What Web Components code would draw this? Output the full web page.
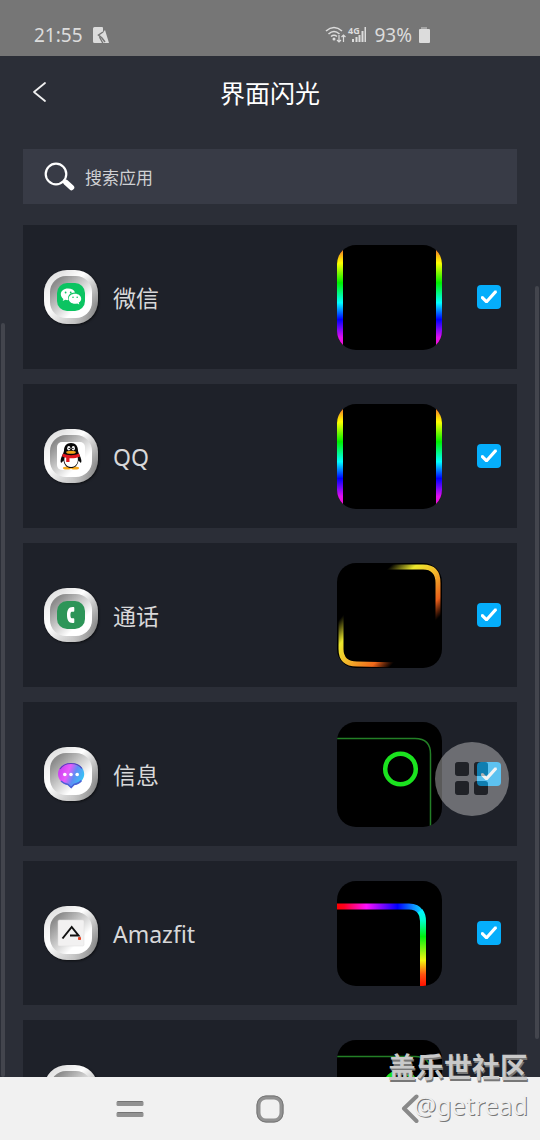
<!DOCTYPE html>
<html lang="zh-CN">
<head>
<meta charset="utf-8">
<meta name="viewport" content="width=device-width, initial-scale=1">
<title>界面闪光</title>
<style>
  body {
    margin: 0;
    font-family: 'Noto Sans', 'Noto Sans CJK SC', sans-serif;
  }
</style>
</head>
<body>
<edge-light-page></edge-light-page>

<script>
const define = (name, html, update) => {
  const tpl = document.createElement('template');
  tpl.innerHTML = html;
  customElements.define(name, class extends HTMLElement {
    static observedAttributes = ['name', 'icon', 'effect'];
    constructor() {
      super();
      this.attachShadow({mode: 'open'}).appendChild(tpl.content.cloneNode(true));
    }
    connectedCallback() {
      if (update) update(this, this.shadowRoot);
    }
    attributeChangedCallback() {
      if (update && this.isConnected) update(this, this.shadowRoot);
    }
  });
};

// artwork of each app, drawn in a 54x54 box
const appIcons = {
  wechat: `
    <rect x="13" y="13" width="28" height="28" rx="10" fill="#0bc461"/>
    <path d="M24 18.500c-4.200 0-7.200 2.500-7.200 5.800 0 1.900 1 3.500 2.600 4.600l-.7 2.200 2.700-1.300c1 .3 1.900.4 3 .3-1.500-4.600 2.200-7.700 6.600-7.600-.7-2.400-3.500-4-7-4z" fill="#fff"/>
    <path d="M31 23.700c-3.600 0-6.300 2.200-6.300 5s2.700 5 6.300 5c.8 0 1.500-.1 2.200-.3l2.100 1.100-.6-1.900c1.500-.9 2.500-2.300 2.500-3.900 0-2.800-2.700-5-6.200-5z" fill="#fff"/>
    <g fill="#0bc461"><circle cx="21.600" cy="22.500" r=".9"/><circle cx="26.700" cy="22.500" r=".9"/><circle cx="29" cy="27.300" r=".8"/><circle cx="33.200" cy="27.300" r=".8"/></g>`,
  qq: `
    <rect x="13" y="13" width="28" height="28" rx="5" fill="#fff"/>
    <ellipse cx="23" cy="39" rx="4" ry="1.500" fill="#f7a91c"/><ellipse cx="31" cy="39" rx="4" ry="1.500" fill="#f7a91c"/>
    <path d="M27 14c-4.500 0-7 3-7 7.500 0 2-2.800 6-3.300 9.500-.3 2 .2 3.300 1 2.600l1.800-2.200c.7 5 3.700 7.600 7.500 7.600s6.800-2.600 7.500-7.600l1.800 2.200c.8.700 1.300-.6 1-2.600-.5-3.500-3.300-7.500-3.300-9.500 0-4.500-2.500-7.500-7-7.500z" fill="#080808"/>
    <path d="M21 27h12.300c2 6-1 11-6.200 11s-8.200-5-6.100-11z" fill="#fff"/>
    <ellipse cx="24.800" cy="19.300" rx="1.600" ry="2.300" fill="#fff"/><ellipse cx="29.300" cy="19.300" rx="1.600" ry="2.300" fill="#fff"/>
    <circle cx="25.200" cy="19.500" r=".8" fill="#111"/><circle cx="28.900" cy="19.500" r=".8" fill="#111"/>
    <ellipse cx="27" cy="23.300" rx="4.800" ry="1.500" fill="#f7a91c"/>
    <path d="M19 24.500c5 2.200 11 2.200 16 0l1 3c-3 1.500-7 2-10.500 1.800V33h-3.300v-4.200c-1.500-.3-3-.8-4.200-1.500z" fill="#e01920"/>`,
  call: `
    <rect x="13" y="13" width="28" height="28" rx="10" fill="#2d9558"/>
    <path d="M28.500 19c-4 0-5.500 3.500-5.500 8s1.500 8 5.500 8h.8c.6 0 1-.4 1-1v-2.800c0-.6-.4-1-1-1h-1.600c-1.600 0-1.800-6.400 0-6.400h1.600c.6 0 1-.4 1-1V20c0-.6-.4-1-1-1z" fill="#fff"/>`,
  message: `
    <defs><linearGradient id="bubble" x1="0" y1=".3" x2="1" y2=".7"><stop offset="0" stop-color="#c83df0"/><stop offset=".35" stop-color="#e85cfa"/><stop offset=".6" stop-color="#5f8df5"/><stop offset="1" stop-color="#2fcff5"/></linearGradient></defs>
    <path d="M27 16c-7.500 0-13 4.600-13 11 0 5.500 4 9.800 9.800 11l3.400 3.200 2.800-3.200c6-1.200 10.200-5.500 10.200-11 0-6.400-5.700-11-13.200-11z" fill="url(#bubble)"/>
    <path d="M16 22c3-4.500 7-5.500 11-5.500s8.500 1.500 11 5" fill="none" stroke="#5345b8" stroke-width="1.200"/>
    <path d="M17 34c2 2 5 3 7 3.500l3.200 3 2.800-3c3-.5 6-2 7.500-4" fill="none" stroke="#4b62d6" stroke-width="1.500"/>
    <g fill="#fff"><circle cx="20.800" cy="27.500" r="1.800"/><circle cx="27" cy="27.500" r="1.800"/><circle cx="33.200" cy="27.500" r="1.800"/></g>`,
  amazfit: `
    <rect x="14" y="14" width="26" height="26" rx="1.500" fill="#f2f1f1" stroke="#dedddd" stroke-width=".5"/>
    <path d="M18.500 32.500 27.700 21l6.800 8.500H26" fill="none" stroke="#111" stroke-width="2"/>
    <rect x="34" y="31" width="3" height="3" rx=".8" fill="#e64525"/>`,
};

// lighting effects, drawn in a 105x105 box
const effects = {
  rainbow: `
    <defs><linearGradient id="rb" x1="0" y1="0" x2="0" y2="1">
      <stop offset="0" stop-color="#f04000"/><stop offset=".07" stop-color="#f79420"/><stop offset=".17" stop-color="#ffff00"/><stop offset=".36" stop-color="#00f000"/><stop offset=".55" stop-color="#00ffff"/><stop offset=".71" stop-color="#0000ff"/><stop offset=".88" stop-color="#e010f0"/><stop offset="1" stop-color="#ff10c0"/>
    </linearGradient></defs>
    <rect width="6" height="105" fill="url(#rb)"/><rect x="99" width="6" height="105" fill="url(#rb)"/>`,
  fire: `
    <defs>
      <linearGradient id="f1" gradientUnits="userSpaceOnUse" x1="48" y1="8" x2="96" y2="60"><stop offset="0" stop-color="#ece82d" stop-opacity="0"/><stop offset=".24" stop-color="#ece82d"/><stop offset=".5" stop-color="#f4b52b"/><stop offset=".8" stop-color="#e85f1a"/><stop offset="1" stop-color="#d84a10" stop-opacity="0"/></linearGradient>
      <linearGradient id="f2" gradientUnits="userSpaceOnUse" x1="8" y1="50" x2="60" y2="96"><stop offset="0" stop-color="#ece82d" stop-opacity="0"/><stop offset=".24" stop-color="#ece82d"/><stop offset=".5" stop-color="#f4b52b"/><stop offset=".8" stop-color="#f0681a"/><stop offset="1" stop-color="#d84a10" stop-opacity="0"/></linearGradient>
    </defs>
    <path d="M46 4H86Q101 4 101 20V60" fill="none" stroke="url(#f1)" stroke-width="5"/>
    <path d="M4 48V86Q4 101 20 101L62 102" fill="none" stroke="url(#f2)" stroke-width="5"/>`,
  ring: `
    <path d="M0 16.500H78Q93.500 16.500 93.500 32V105" fill="none" stroke="#237f26" stroke-width="1.500"/>
    <circle cx="63.500" cy="47" r="15.300" fill="none" stroke="#1be31f" stroke-width="4.500"/>`,
  curve: `
    <defs>
      <linearGradient id="c1" gradientUnits="userSpaceOnUse" x1="0" y1="25" x2="89" y2="25"><stop offset="0" stop-color="#ff0000"/><stop offset=".08" stop-color="#ff0020"/><stop offset=".33" stop-color="#ff10ff"/><stop offset=".68" stop-color="#0000ff"/><stop offset=".86" stop-color="#1090ff"/><stop offset="1" stop-color="#00f5ff"/></linearGradient>
      <linearGradient id="c2" gradientUnits="userSpaceOnUse" x1="86" y1="30" x2="86" y2="105"><stop offset="0" stop-color="#00f5ff"/><stop offset=".12" stop-color="#00ffd0"/><stop offset=".34" stop-color="#00f010"/><stop offset=".66" stop-color="#f5f510"/><stop offset=".85" stop-color="#ff5010"/><stop offset="1" stop-color="#ff1000"/></linearGradient>
    </defs>
    <path d="M0 25.500H72Q80 25.500 83.500 31" fill="none" stroke="url(#c1)" stroke-width="6"/>
    <path d="M83 30Q86 34 86 40V105" fill="none" stroke="url(#c2)" stroke-width="6"/>`,
};

define('status-bar', `
  <style>
    :host {
      display: flex;
      justify-content: space-between;
      align-items: flex-end;
      height: 56px;
      padding: 0 110px 8px 34px;
      box-sizing: border-box;
      background: #767676;
      color: #dcdcdc;
      font-size: 19px;
      line-height: 26px;
    }
    div { display: flex; align-items: center; }
    .left { gap: 10px; }
    .right { gap: 6px; }
    svg { display: block; overflow: visible; }
    .net { display: flex; align-items: center; gap: 2px; }
  </style>
  <div class="left">
    <span>21:55</span>
    <svg width="16" height="17" viewBox="0 0 16 17"><path d="M1.500 0H9Q10 0 10 1V5.500L12 3 16 16H10.500L7 9.500 6 10.500 9 16H1.500Q0 16 0 14.500V1.500Q0 0 1.500 0Z" fill="#dcdcdc"/><path d="M10 5 5.500 8 9 11 12 15" fill="none" stroke="#767676" stroke-width="1.500"/></svg>
  </div>
  <div class="right">
    <span class="net">
      <svg width="21" height="20" viewBox="0 0 21 20" fill="none" stroke="#dcdcdc" stroke-width="1.600">
        <path d="M1 6Q9-1 17 6M3.500 9Q9 4 14.500 9M6 11.500Q9 9 12 11.500"/>
        <circle cx="9" cy="14" r="1.500" fill="#dcdcdc" stroke="none"/>
        <path d="M14 10v7m-2-2 2 2 2-2M18.500 17v-7m-2 2 2-2 2 2" stroke-width="1.200"/>
      </svg>
      <svg width="20" height="26" viewBox="0 0 20 26">
        <text x="0" y="12" font-size="9" font-weight="700" fill="#dcdcdc">4G</text>
        <path d="M4 17h2v3H4zM7.500 15h2v5h-2zM10.500 13h2v7h-2zM13.500 9h2v11h-2zM16.500 5h1.500v15h-1.500z" fill="#dcdcdc"/>
      </svg>
    </span>
    <span>93%</span>
    <svg width="12" height="17" viewBox="0 0 12 17"><path d="M3 0h6v2H3z" fill="#a5a5a5"/><rect x="1" y="2" width="11" height="14" rx="1" fill="#dcdcdc"/></svg>
  </div>
`);

define('title-bar', `
  <style>
    :host {
      display: grid;
      grid-template-columns: 1fr auto 1fr;
      align-items: center;
      height: 72px;
      padding: 0 32px;
      color: #fff;
    }
    button { justify-self: start; padding: 0; border: 0; background: none; }
    svg { display: block; }
    h1 { margin: 0; padding-top: 2px; font-size: 25px; line-height: 36px; font-weight: 400; }
  </style>
  <button aria-label="返回">
    <svg width="15" height="22" viewBox="0 0 15 22"><path d="M13 2 2 11 13 20" fill="none" stroke="#f0f0f0" stroke-width="1.800" stroke-linecap="round" stroke-linejoin="round"/></svg>
  </button>
  <h1><slot></slot></h1>
`);

define('search-box', `
  <style>
    :host { display: block; margin: 21px 23px; }
    label {
      display: flex;
      align-items: center;
      gap: 10px;
      height: 55px;
      padding: 0 21px;
      background: #383b46;
    }
    svg { display: block; flex: none; }
    input {
      flex: 1;
      min-width: 0;
      padding: 2px 0 0;
      border: 0;
      outline: 0;
      background: none;
      color: #d0d1d4;
      font: inherit;
      font-size: 17px;
      line-height: 26px;
    }
    input::placeholder { color: #d0d1d4; opacity: 1; }
  </style>
  <label>
    <svg width="31" height="30" viewBox="0 0 31 30"><circle cx="12" cy="12" r="10.300" fill="none" stroke="#fff" stroke-width="2.200"/><path d="M19.500 19 22 21.500" stroke="#fff" stroke-width="3"/><path d="M22 20.500 27.500 25.500" stroke="#fff" stroke-width="5.500" stroke-linecap="round"/></svg>
    <input type="text" placeholder="搜索应用" aria-label="搜索应用">
  </label>
`);

define('app-icon', `
  <style>
    :host { display: block; flex: none; filter: drop-shadow(1px 1px 1px #0008); }
    svg { display: block; }
  </style>
  <svg width="54" height="54" viewBox="0 0 54 54">
    <defs>
      <linearGradient id="rim" x1="0" y1="0" x2="1" y2="1"><stop offset=".15" stop-color="#e0e0e0"/><stop offset=".4" stop-color="#fff"/><stop offset=".6" stop-color="#c8c8c8"/><stop offset=".85" stop-color="#858585"/></linearGradient>
      <linearGradient id="rimv" x1="1" y1="0" x2="0" y2="1"><stop offset=".35" stop-color="#fff" stop-opacity="0"/><stop offset=".7" stop-color="#fff"/></linearGradient>
      <linearGradient id="dish" x1="0" y1="0" x2="1" y2="1"><stop offset=".15" stop-color="#8c8c8c"/><stop offset=".5" stop-color="#d5d5d5"/><stop offset=".7" stop-color="#fff"/></linearGradient>
    </defs>
    <rect width="54" height="54" rx="23" fill="url(#rim)"/>
    <rect width="54" height="54" rx="23" fill="url(#rimv)" opacity=".4"/>
    <rect x="6" y="6" width="42" height="42" rx="16" fill="url(#dish)"/>
    <g></g>
  </svg>
`, (el, root) => {
  root.querySelector('g').innerHTML = appIcons[el.getAttribute('name')] || '';
});

define('effect-preview', `
  <style>
    :host { display: block; flex: none; border-radius: 19px; overflow: hidden; background: #000; }
    svg { display: block; }
  </style>
  <svg width="105" height="105" viewBox="0 0 105 105"></svg>
`, (el, root) => {
  root.querySelector('svg').innerHTML = effects[el.getAttribute('name')] || '';
});

define('app-row', `
  <style>
    :host { display: block; background: #1e2129; }
    label {
      display: flex;
      align-items: center;
      height: 144px;
      padding: 0 16px 0 21px;
    }
    .name {
      flex: 1;
      padding: 2px 0 0 15px;
      color: #d8d8d9;
      font-size: 23px;
      line-height: 32px;
    }
    input {
      appearance: none;
      flex: none;
      width: 24px;
      height: 24px;
      margin: 0 0 0 35px;
      border-radius: 4px;
      background: #353842;
      display: grid;
      place-items: center;
    }
    input:checked { background: #05aefb; }
    input:checked::before {
      content: '';
      width: 16px;
      height: 14px;
      background: #fff;
      clip-path: path('M0 6.500 2 6 5.500 9.500 13.500 .500 15.500 .500 16 2.500 6.500 13 4.500 13 0 8.500Z');
    }
  </style>
  <label>
    <app-icon></app-icon>
    <span class="name"><slot></slot></span>
    <effect-preview></effect-preview>
    <input type="checkbox" checked>
  </label>
`, (el, root) => {
  root.querySelector('app-icon').setAttribute('name', el.getAttribute('icon') || '');
  root.querySelector('effect-preview').setAttribute('name', el.getAttribute('effect') || '');
});

define('app-list', `
  <style>
    :host {
      display: flex;
      flex-direction: column;
      gap: 15px;
      margin: 0 23px;
    }
  </style>
  <slot></slot>
`);

define('float-button', `
  <style>
    :host { display: block; }
    button { display: block; padding: 0; border: 0; background: none; }
    svg { display: block; }
  </style>
  <button aria-label="快捷菜单">
    <svg width="74" height="74" viewBox="0 0 74 74">
      <defs>
        <g id="tiles"><rect x="20" y="20" width="14" height="14" rx="3"/><rect x="39" y="20" width="14" height="14" rx="3"/><rect x="20" y="39" width="14" height="14" rx="3"/><rect x="39" y="39" width="14" height="14" rx="3"/></g>
        <mask id="holes"><rect width="74" height="74" fill="#fff"/><use href="#tiles" fill="#000"/></mask>
      </defs>
      <circle cx="37" cy="37" r="37" fill="#e1e1e1" fill-opacity=".4" mask="url(#holes)"/>
      <use href="#tiles" fill="#252525" fill-opacity=".35"/>
    </svg>
  </button>
`);

define('nav-bar', `
  <style>
    :host {
      display: grid;
      grid-template-columns: 1fr 1fr 1fr;
      align-items: center;
      height: 63px;
      padding: 0 60px;
      background: #f1f1f1;
    }
    button { justify-self: center; padding: 0; border: 0; background: none; }
    svg { display: block; }
  </style>
  <button aria-label="最近任务">
    <svg width="28" height="18" viewBox="0 0 28 18"><g fill="#929292"><rect x=".5" y="1" width="27" height="5" rx="1.500"/><rect x=".5" y="12" width="27" height="5" rx="1.500"/></g><path d="M1.500 1.500h25M1.500 12.500h25" stroke="#757575"/></svg>
  </button>
  <button aria-label="主页">
    <svg width="28" height="28" viewBox="0 0 28 28"><rect x="2.500" y="2.500" width="23" height="23" rx="7.500" fill="none" stroke="#929292" stroke-width="4"/><rect x="1" y="1" width="26" height="26" rx="9" fill="none" stroke="#777"/></svg>
  </button>
  <button aria-label="返回">
    <svg width="18" height="30" viewBox="0 0 18 30"><path d="M15.500 2.500 3 14.500 15.500 27" fill="none" stroke="#898989" stroke-width="4" stroke-linecap="round" stroke-linejoin="round"/></svg>
  </button>
`);

define('water-mark', `
  <style>
    :host {
      display: block;
      text-align: right;
      color: #c9c9c9;
      pointer-events: none;
    }
    .site {
      font-size: 28px;
      line-height: 38px;
      font-weight: 700;
      text-shadow: 1px 2px 0 #777;
    }
    .user {
      font-size: 25px;
      line-height: 38px;
      color: #eee;
      text-shadow: 1px 1px 0 #777;
    }
  </style>
  <div class="site"><slot name="site"></slot></div>
  <div class="user"><slot name="user"></slot></div>
`);

define('edge-light-page', `
  <style>
    :host {
      display: flex;
      flex-direction: column;
      height: 100vh;
      position: relative;
      overflow: hidden;
      background: #2b2e37;
    }
    main { flex: 1; min-height: 0; overflow: hidden; }
    .thumb { position: absolute; width: 4px; border-radius: 2px; background: #43454d; }
    .thumb.left { left: 1px; top: 323px; bottom: 63px; }
    .thumb.right { right: 1px; top: 286px; bottom: 101px; }
    float-button { position: absolute; right: 31px; top: 742px; }
    water-mark { position: absolute; right: 12px; bottom: 16px; }
  </style>
  <status-bar></status-bar>
  <main>
    <title-bar>界面闪光</title-bar>
    <search-box></search-box>
    <app-list>
      <app-row icon="wechat" effect="rainbow">微信</app-row>
      <app-row icon="qq" effect="rainbow">QQ</app-row>
      <app-row icon="call" effect="fire">通话</app-row>
      <app-row icon="message" effect="ring">信息</app-row>
      <app-row icon="amazfit" effect="curve">Amazfit</app-row>
      <app-row effect="ring"></app-row>
    </app-list>
  </main>
  <nav-bar></nav-bar>
  <div class="thumb left"></div>
  <div class="thumb right"></div>
  <float-button></float-button>
  <water-mark><span slot="site">盖乐世社区</span><span slot="user">@getread</span></water-mark>
`);
</script>
</body>
</html>
